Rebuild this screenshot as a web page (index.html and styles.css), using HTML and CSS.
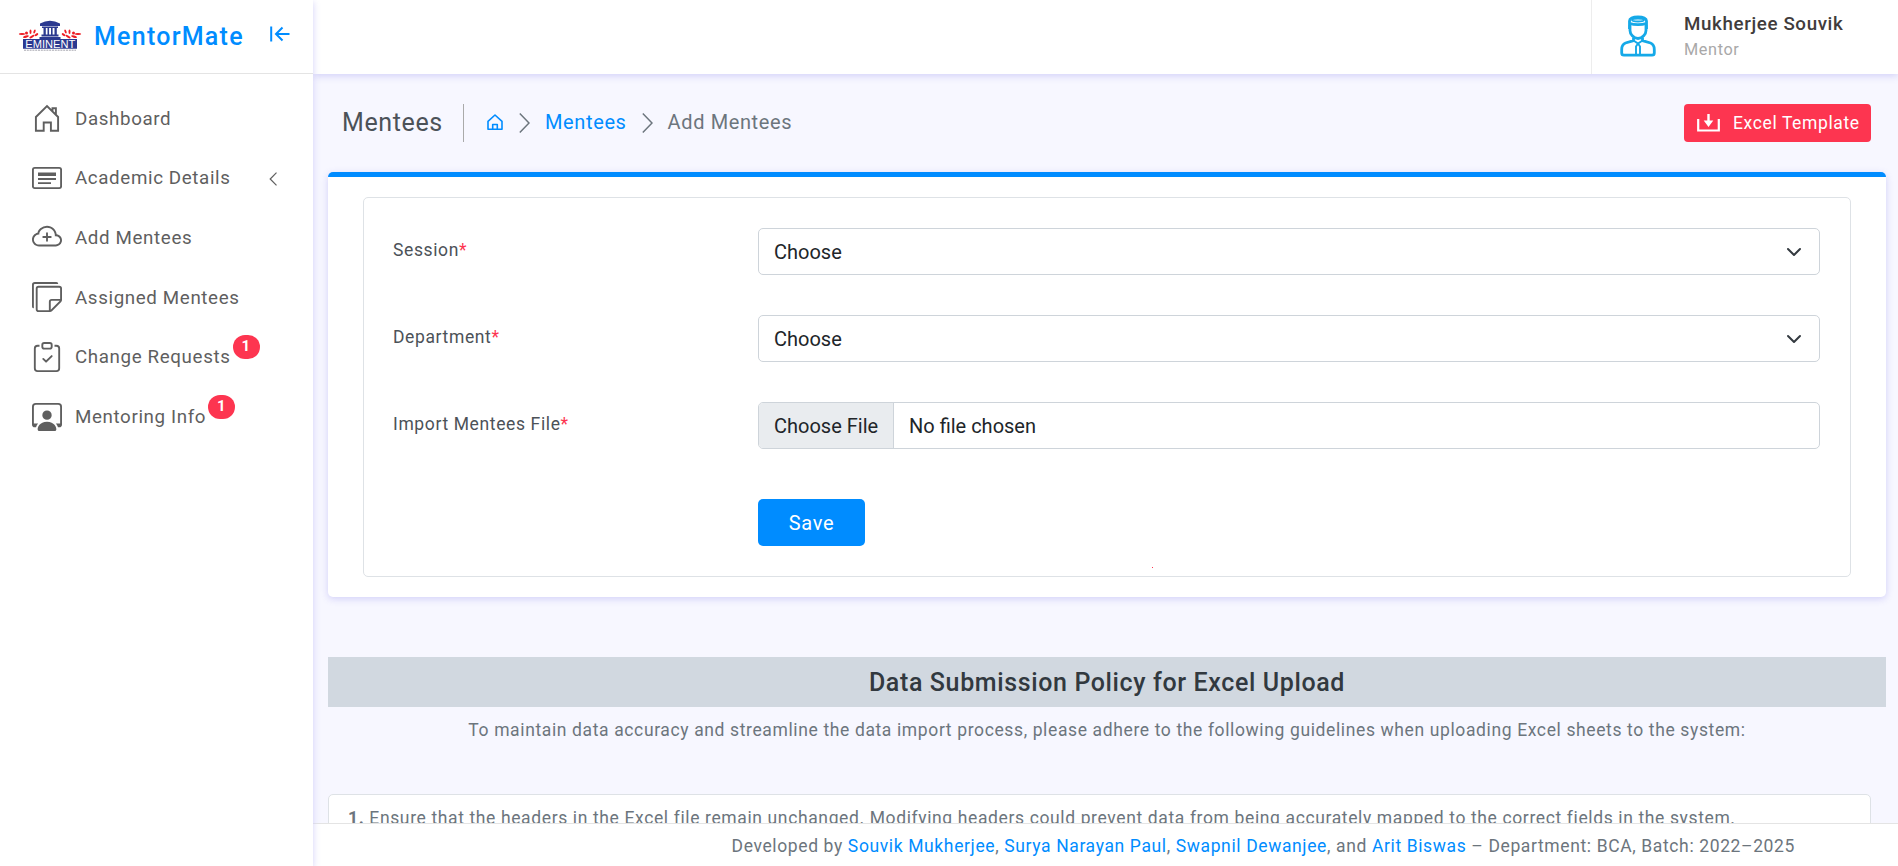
FILE: index.html
```html
<!DOCTYPE html>
<html lang="en">
<head>
<meta charset="utf-8">
<title>MentorMate - Add Mentees</title>
<link rel="stylesheet" href="styles.css">
</head>
<body>
<div class="app">
  <aside class="sidebar">
    <div class="brand">
      <svg class="brand-logo" viewBox="0 0 64 34">
        <path d="M22 5.500Q32 0 42 5.500V8H22zM24 8.500h16V10H24zM25.500 10h2.300v8h-2.300zM29.500 10h1.600v8h-1.600zM33 10h1.600v8H33zM36.500 10h2.300v8h-2.300zM23.500 16.500h17v2h-17zM21.500 19h21v2h-21z" fill="#2b3990"/>
        <g fill="#ed1c24"><ellipse cx="4" cy="16" rx="3.200" ry="1"/><ellipse cx="8" cy="18.600" rx="3" ry="1.100" transform="rotate(-15 8 18.600)"/><ellipse cx="8.500" cy="15" rx="1.500" ry="1.500"/><ellipse cx="12.500" cy="13.800" rx="1" ry="2.200"/><ellipse cx="16.500" cy="13.500" rx="1" ry="2" transform="rotate(20 16.500 13.500)"/><ellipse cx="14" cy="18.600" rx="3" ry="1.100" transform="rotate(-30 14 18.600)"/><ellipse cx="18.500" cy="16.600" rx="2" ry="1.100" transform="rotate(-35 18.500 16.600)"/>
        <ellipse cx="60" cy="16" rx="3.200" ry="1"/><ellipse cx="56" cy="18.600" rx="3" ry="1.100" transform="rotate(15 56 18.600)"/><ellipse cx="55.500" cy="15" rx="1.500" ry="1.500"/><ellipse cx="51.500" cy="13.800" rx="1" ry="2.200"/><ellipse cx="47.500" cy="13.500" rx="1" ry="2" transform="rotate(-20 47.500 13.500)"/><ellipse cx="50" cy="18.600" rx="3" ry="1.100" transform="rotate(30 50 18.600)"/><ellipse cx="45.500" cy="16.600" rx="2" ry="1.100" transform="rotate(35 45.500 16.600)"/></g>
        <path d="M5 21h54v9.800H5z" fill="#2b3990"/>
        <text x="32.300" y="30" text-anchor="middle" textLength="50" lengthAdjust="spacingAndGlyphs" class="logo-word">EMINENT</text>
        <path d="M6 32.200h52" stroke="#a5a5ae" stroke-width="1" stroke-dasharray="2 .8"/>
      </svg>
      <span class="brand-name">MentorMate</span>
      <svg class="collapse" viewBox="0 0 20 16"><path d="M1.200 .5v15M19.500 8H6.500M12.500 1.500L6 8l6.500 6.500" fill="none" stroke="#008cff" stroke-width="2"/></svg>
    </div>
    <nav class="menu">
      <a class="menu-item"><svg class="icon" viewBox="0 0 30 30"><path d="M3.900 14L15 3l11.100 11v13.700h-7.200v-8.200h-7.200v8.200H3.900zM20.500 8.500V5.200h3.400v6.600" fill="none" stroke="#5f5f5f" stroke-width="1.900"/></svg><span>Dashboard</span></a>
      <a class="menu-item"><svg class="icon" viewBox="0 0 30 30"><rect x=".9" y="4.900" width="28.200" height="20.200" rx="1.800" fill="none" stroke="#5f5f5f" stroke-width="1.900"/><path d="M6 9.500h18v3.500H6zM6 15h18v2H6zM6 19.200h13v1.700H6z" fill="#5f5f5f"/></svg><span>Academic Details</span><svg class="caret" viewBox="0 0 8 14"><path d="M7.500.7L1.200 7l6.300 6.300" fill="none" stroke="#5f5f5f" stroke-width="1.200"/></svg></a>
      <a class="menu-item"><svg class="icon" viewBox="0 0 16 16" fill="#5f5f5f"><path d="M8 5.500a.5.500 0 0 1 .5.500v1.500H10a.5.500 0 0 1 0 1H8.500V10a.5.500 0 0 1-1 0V8.500H6a.5.500 0 0 1 0-1h1.500V6a.5.500 0 0 1 .5-.5z"/><path d="M4.406 3.342A5.530 5.530 0 0 1 8 2c2.690 0 4.923 2 5.166 4.579C14.758 6.804 16 8.137 16 9.773 16 11.569 14.502 13 12.687 13H3.781C1.708 13 0 11.366 0 9.318c0-1.763 1.266-3.223 2.942-3.593.143-.863.698-1.723 1.464-2.383zm.653.757c-.757.653-1.153 1.440-1.153 2.056v.448l-.445.049C2.064 6.805 1 7.952 1 9.318 1 10.785 2.230 12 3.781 12h8.906C13.980 12 15 10.988 15 9.773c0-1.216-1.020-2.228-2.313-2.228h-.5v-.5C12.188 4.825 10.328 3 8 3a4.530 4.530 0 0 0-2.941 1.100z"/></svg><span>Add Mentees</span></a>
      <a class="menu-item"><svg class="icon" viewBox="0 0 16 16" fill="#5f5f5f"><path d="M1.500 0A1.500 1.500 0 0 0 0 1.500V13a1 1 0 0 0 1 1V1.500a.5.500 0 0 1 .5-.5H14a1 1 0 0 0-1-1z"/><path d="M3.500 2A1.500 1.500 0 0 0 2 3.500v11A1.500 1.500 0 0 0 3.500 16h6.086a1.500 1.500 0 0 0 1.060-.44l4.915-4.914A1.500 1.500 0 0 0 16 9.586V3.500A1.500 1.500 0 0 0 14.500 2zM3 3.500a.5.500 0 0 1 .5-.5h11a.5.500 0 0 1 .5.500V9h-4.500A1.500 1.500 0 0 0 9 10.500V15H3.500a.5.500 0 0 1-.5-.5zm7 11.293V10.500a.5.500 0 0 1 .5-.5h4.293z"/></svg><span>Assigned Mentees</span></a>
      <a class="menu-item"><svg class="icon" viewBox="0 0 16 16" fill="#5f5f5f"><path fill-rule="evenodd" d="M10.854 7.146a.5.500 0 0 1 0 .708l-3 3a.5.500 0 0 1-.708 0l-1.500-1.500a.5.500 0 1 1 .708-.708L7.500 9.793l2.646-2.647a.5.500 0 0 1 .708 0z"/><path d="M4 1.500H3a2 2 0 0 0-2 2V14a2 2 0 0 0 2 2h10a2 2 0 0 0 2-2V3.500a2 2 0 0 0-2-2h-1v1h1a1 1 0 0 1 1 1V14a1 1 0 0 1-1 1H3a1 1 0 0 1-1-1V3.500a1 1 0 0 1 1-1h1z"/><path d="M9.500 1a.5.500 0 0 1 .5.500v1a.5.500 0 0 1-.5.500h-3a.5.500 0 0 1-.5-.5v-1a.5.500 0 0 1 .5-.5zm-3-1A1.500 1.500 0 0 0 5 1.500v1A1.500 1.500 0 0 0 6.500 4h3A1.500 1.500 0 0 0 11 2.500v-1A1.500 1.500 0 0 0 9.500 0z"/></svg><span>Change Requests</span><b class="badge">1</b></a>
      <a class="menu-item"><svg class="icon" viewBox="0 0 16 16" fill="#5f5f5f"><path d="M4 16s-1 0-1-1 1-4 5-4 5 3 5 4-1 1-1 1zm4-5.950a2.500 2.500 0 1 0 0-5 2.500 2.500 0 0 0 0 5z"/><path d="M2 1a2 2 0 0 0-2 2v9.500A1.500 1.500 0 0 0 1.500 14h.653a5.373 5.373 0 0 1 1.066-2H1V3a1 1 0 0 1 1-1h12a1 1 0 0 1 1 1v9h-2.219c.554.654.89 1.373 1.066 2h.653a1.500 1.500 0 0 0 1.500-1.500V3a2 2 0 0 0-2-2z"/></svg><span>Mentoring Info</span><b class="badge">1</b></a>
    </nav>
  </aside>
  <div class="page">
    <header class="topbar">
      <div class="user">
        <svg class="avatar" viewBox="0 0 36 42" fill="none" stroke="#15a9e8" stroke-width="2.800">
          <path d="M10 10v5.500c0 3.500 3.500 8 8 8s8-4.500 8-8V10"/>
          <path d="M9.500 14V6c0-2.500 3-4 8.500-4s8.500 1.500 8.500 4v8"/>
          <ellipse cx="18" cy="5" rx="6" ry="1.500" stroke-width="1.800"/><path d="M10 8.500c4 1.600 12 1.600 16 0"/>
          <path d="M13.500 22.500v3.200L5.500 28C3 29 1.700 31.500 1.700 34.500V38c0 1.400.8 2.200 2.200 2.200h28.200c1.400 0 2.200-.8 2.200-2.200v-3.500c0-3-1.300-5.500-3.800-6.500l-8-2.300v-3.200"/>
          <path d="M13.500 25.500L18 28.500l4.500-3M18 28.500l-2 3v8.500M18 28.500l2 3v8.500" stroke-width="1.900"/>
        </svg>
        <div class="user-text"><div class="user-name">Mukherjee Souvik</div><div class="user-role">Mentor</div></div>
      </div>
    </header>
    <main class="content">
      <div class="page-head">
        <h1 class="page-title">Mentees</h1>
        <div class="crumbs">
          <svg class="crumb-home" viewBox="0 0 16 17"><path d="M1 7.300L8 1l7 6.300v8H1zM5.700 15.300v-4.800h4.600v4.800" fill="none" stroke="#008cff" stroke-width="1.600" stroke-linejoin="round"/></svg>
          <svg class="chev" viewBox="0 0 11 20"><path d="M.8.600L10 10 .8 19.400" fill="none" stroke="#6c757d" stroke-width="1.500"/></svg>
          <a class="link">Mentees</a>
          <svg class="chev chev-next" viewBox="0 0 11 20"><path d="M.8.600L10 10 .8 19.400" fill="none" stroke="#6c757d" stroke-width="1.500"/></svg>
          <span>Add Mentees</span>
        </div>
        <button class="excel"><svg viewBox="0 0 23 18"><path d="M1.200 5v11.500h20.600V5" fill="none" stroke="#fff" stroke-width="2.200"/><path d="M10.300 0h2.400v6.500h3.600L11.500 13 6.700 6.500h3.600z" fill="#fff"/></svg><span>Excel Template</span></button>
      </div>
      <section class="card">
        <form class="form">
          <label class="label">Session<i>*</i></label>
          <div class="control select"><span>Choose</span><svg viewBox="0 0 16 16"><path d="m2 5 6 6 6-6" fill="none" stroke="#343a40" stroke-width="2" stroke-linecap="round" stroke-linejoin="round"/></svg></div>
          <label class="label">Department<i>*</i></label>
          <div class="control select"><span>Choose</span><svg viewBox="0 0 16 16"><path d="m2 5 6 6 6-6" fill="none" stroke="#343a40" stroke-width="2" stroke-linecap="round" stroke-linejoin="round"/></svg></div>
          <label class="label">Import Mentees File<i>*</i></label>
          <div class="control file"><span class="file-btn">Choose File</span><span>No file chosen</span></div>
          <button type="button" class="save">Save</button>
          <span class="dot"></span>
        </form>
      </section>
      <h2 class="policy-title">Data Submission Policy for Excel Upload</h2>
      <p class="policy-lead">To maintain data accuracy and streamline the data import process, please adhere to the following guidelines when uploading Excel sheets to the system:</p>
      <div class="policy-item"><b>1.</b> Ensure that the headers in the Excel file remain unchanged. Modifying headers could prevent data from being accurately mapped to the correct fields in the system.</div>
    </main>
    <footer class="footer"><span>Developed by <a class="link">Souvik Mukherjee</a>, <a class="link">Surya Narayan Paul</a>, <a class="link">Swapnil Dewanjee</a>, and <a class="link">Arit Biswas</a> – Department: BCA, Batch: 2022–2025</span></footer>
  </div>
</div>
</body>
</html>
```
FILE: styles.css
```css
* { box-sizing: border-box; }
body {
  margin: 0;
  font-family: Roboto, sans-serif;
  font-size: 17.5px;
  letter-spacing: .625px;
  color: #4c5258;
  background: #f7f7ff;
}
.app { display: flex; height: 866px; overflow: hidden; }
.link { color: #008cff; }

/* Sidebar */
.sidebar {
  width: 313px;
  flex: none;
  background: #fff;
  box-shadow: 0 2px 7px rgba(206, 204, 247, .9);
  z-index: 2;
}
.brand {
  height: 74px;
  border-bottom: 1px solid #e4e4e4;
  display: flex;
  align-items: center;
  padding: 0 23px 0 18px;
}
.brand-logo { width: 64px; height: 34px; margin-top: -3px; }
.logo-word { font: 400 11px "Liberation Sans", sans-serif; fill: #fff; letter-spacing: 0; }
.brand-name {
  margin-left: 12px;
  font-size: 25px;
  font-weight: 500;
  letter-spacing: 1.250px;
  color: #008cff;
}
.collapse { width: 20px; height: 16px; margin-left: auto; margin-top: -6px; }
.menu { padding-top: 15px; }
.menu-item {
  display: flex;
  align-items: center;
  height: 59.600px;
  padding: 0 36px 0 32px;
  font-size: 18.750px;
  color: #5f5f5f;
}
.icon { width: 30px; height: 30px; margin: -1px 13px 0 0; flex: none; }
.caret { width: 8px; height: 14px; margin-left: auto; margin-top: 2px; }
.badge {
  width: 27px;
  height: 24px;
  margin: -20px 0 0 2px;
  border-radius: 12px;
  background: #fd3550;
  color: #fff;
  font-size: 15px;
  line-height: 23px;
  text-align: center;
}

/* Top bar */
.page { flex: 1; display: flex; flex-direction: column; min-width: 0; }
.topbar {
  height: 74px;
  flex: none;
  display: flex;
  justify-content: flex-end;
  background: #fff;
  box-shadow: 0 2px 7px rgba(206, 204, 247, .9);
  z-index: 1;
}
.user { width: 307px; border-left: 1px solid #ededed; display: flex; padding-left: 28px; }
.avatar { width: 36px; height: 42px; margin: 15px 28px 0 0; }
.user-name { margin-top: 12px; line-height: 24px; font-size: 18.750px; font-weight: 500; color: #413c3c; }
.user-role { margin-top: 2px; line-height: 24px; font-size: 16.250px; color: #a9a8a8; }

/* Content */
.content { flex: 1; min-height: 0; padding: 30px 12px 0 15px; overflow: hidden; }
.page-head { display: flex; align-items: center; height: 38px; padding: 0 15px 0 14px; }
.page-title {
  margin: 0;
  width: 122px;
  line-height: 38px;
  border-right: 1px solid #aaa;
  font-size: 25px;
  font-weight: 400;
}
.crumbs { display: flex; align-items: center; margin: -2px 0 0 23px; font-size: 20px; color: #6c757d; }
.crumb-home { width: 16px; height: 17px; margin-top: 1px; }
.chev { width: 11px; height: 20px; margin: 1px 15px 0 16px; }
.chev-next { margin-left: 15px; }
.excel {
  display: flex;
  align-items: center;
  width: 187px;
  height: 38px;
  margin-left: auto;
  padding: 0 0 0 13px;
  border: 0;
  border-radius: 4px;
  background: #fd3550;
  color: #fff;
  font: 400 17.500px Roboto, sans-serif;
  letter-spacing: .625px;
}
.excel svg { width: 23px; height: 18px; margin-right: 13px; }
.excel span { margin-top: -1px; }
.card {
  margin-top: 30px;
  height: 425px;
  padding: 20px 35px 0;
  border-top: 5px solid #008cff;
  border-radius: 5px;
  background: #fff;
  box-shadow: 0 2px 7px rgba(206, 204, 247, .9);
}
.form {
  position: relative;
  height: 380px;
  padding: 30px 30px 0 29px;
  border: 1px solid #dee2e6;
  border-radius: 5px;
  display: grid;
  grid-template-columns: 365px 1fr;
  grid-template-rows: 87px 87px 97px 47px;
}
.label { padding-top: 10px; line-height: 24px; }
.label i { font-style: normal; color: #fd3550; }
.control {
  height: 47px;
  display: flex;
  align-items: center;
  border: 1px solid #ced4da;
  border-radius: 5px;
  padding: 0 15px;
  color: #212529;
  font-size: 20px;
  letter-spacing: 0;
  overflow: hidden;
}
.select { justify-content: space-between; padding-right: 17px; }
.select svg { width: 16px; height: 16px; }
.file { padding-left: 0; }
.file-btn {
  width: 135px;
  height: 45px;
  line-height: 46px;
  margin-right: 15px;
  padding-left: 15px;
  border-right: 1px solid #ced4da;
  background: #e9ecef;
}
.save {
  grid-column: 2;
  width: 107px;
  height: 47px;
  border: 0;
  border-radius: 5px;
  background: #008cff;
  color: #fff;
  font: 400 20px Roboto, sans-serif;
  letter-spacing: .625px;
}
.dot { position: absolute; left: 788px; top: 369px; width: 1px; height: 1px; background: #fd3550; }

/* Upload policy */
.policy-title {
  margin: 60px 0 0;
  height: 50px;
  line-height: 52px;
  text-align: center;
  background: #d1d8e0;
  color: #32393f;
  font-size: 25px;
  font-weight: 500;
}
.policy-lead { margin: 10px 0 0; line-height: 26px; text-align: center; color: #6c757d; }
.policy-item {
  margin: 51px 15px 0 0;
  height: 60px;
  padding: 10px 19px;
  line-height: 26px;
  border: 1px solid #dee2e6;
  border-radius: 5px;
  background: #fff;
  color: #6c757d;
}
.footer {
  height: 43px;
  flex: none;
  padding-right: 103px;
  border-top: 1px solid #e4e4e4;
  background: #fff;
  color: #6c757d;
  line-height: 45px;
  text-align: right;
  z-index: 1;
}
```
